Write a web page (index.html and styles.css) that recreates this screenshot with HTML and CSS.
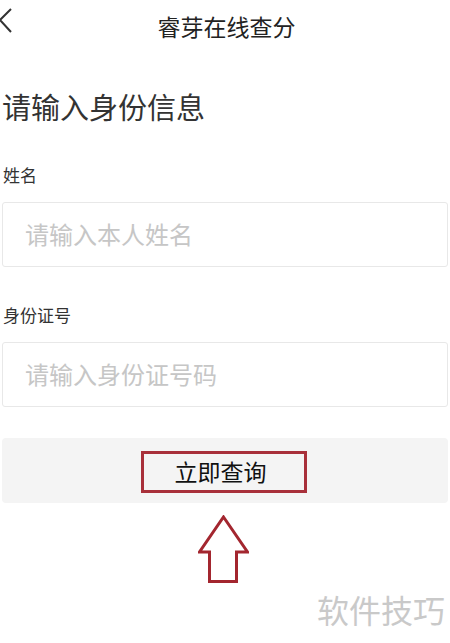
FILE: index.html
```html
<!DOCTYPE html>
<html lang="zh-CN">

<head>
  <meta charset="UTF-8" />
  <meta name="viewport" content="width=device-width, initial-scale=1.0" />
  <title>睿芽在线查分</title>
  <link rel="stylesheet" href="styles.css">
</head>

<body>
  <!-- Barra superior -->
  <header class="topo">
    <span class="voltar">
      <svg width="14" height="28" viewBox="0 0 14 28">
        <polyline points="12,2 1,13 12,25" fill="none" stroke="#333" stroke-width="2" />
      </svg>
    </span>
    <span class="titulo">睿芽在线查分</span>
  </header>

  <main class="pagina">
    <h1>请输入身份信息</h1>

    <form class="formulario">
      <label class="rotulo rotuloNome" for="nome">姓名</label>
      <input class="campo" type="text" id="nome" placeholder="请输入本人姓名" />

      <label class="rotulo rotuloId" for="idCard">身份证号</label>
      <input class="campo" type="text" id="idCard" placeholder="请输入身份证号码" />

      <div class="botaoArea">
        <button class="botaoConsultar" type="button">立即查询</button>
      </div>
    </form>

    <!-- Seta indicando o botão -->
    <div class="seta">
      <svg width="51" height="68" viewBox="0 0 51 68">
        <polygon points="25.5,2 49.5,37 38.5,37 38.5,66.5 11.5,66.5 11.5,37 1.5,37" fill="none" stroke="#a3262f"
          stroke-width="3" stroke-linejoin="miter" />
      </svg>
    </div>

    <p class="marca">软件技巧</p>
  </main>
</body>

</html>
```

FILE: styles.css
```css
body {
  margin: 0;
  width: 450px;
  background: #fff;
  font-family: "Noto Sans CJK SC", "Noto Sans", sans-serif;
  color: #333;
}

.topo {
  position: relative;
  height: 52px;
  display: flex;
  align-items: center;
  justify-content: center;
}

.voltar {
  position: absolute;
  left: -1px;
  top: 7px;
}

.titulo {
  font-size: 23px;
  color: #222;
  line-height: 52px;
  margin-left: 3px;
}

.pagina {
  padding: 0 2px;
}

h1 {
  margin: 34px 0 0 0;
  font-size: 29px;
  line-height: 40px;
  font-weight: 400;
  color: #333;
}

.formulario {
  display: flex;
  flex-direction: column;
}

.rotulo {
  font-size: 17px;
  line-height: 24px;
  color: #333;
  margin-left: 1px;
}

.rotuloNome {
  margin-top: 37px;
}

.rotuloId {
  margin-top: 36px;
}

.campo {
  margin-top: 15px;
  height: 65px;
  box-sizing: border-box;
  border: 1px solid #e8e8e8;
  border-radius: 3px;
  padding: 0 0 2px 22px;
  font-family: "Noto Sans CJK SC", "Noto Sans", sans-serif;
  font-size: 24px;
  color: #333;
  outline: none;
}

.campo::placeholder {
  color: #c6c6c6;
}

.botaoArea {
  margin-top: 31px;
  height: 65px;
  box-sizing: border-box;
  padding-top: 13px;
  background-color: #f4f4f4;
  border-radius: 4px;
  display: flex;
  justify-content: center;
  align-items: flex-start;
}

.botaoConsultar {
  width: 166px;
  height: 42px;
  margin-left: -2px;
  box-sizing: border-box;
  border: solid 3px #a8303a;
  background-color: #f4f4f4;
  font-family: "Noto Sans CJK SC", "Noto Sans", sans-serif;
  font-size: 23px;
  line-height: 34px;
  color: #111;
  padding: 0 7px 2px 0;
}

.seta {
  margin-top: 12px;
  margin-left: 196px;
  height: 68px;
}

.seta svg {
  display: block;
}

.marca {
  margin: 8px 3px 0 0;
  text-align: right;
  font-size: 32px;
  line-height: 36px;
  color: #c9c9c9;
}
```
